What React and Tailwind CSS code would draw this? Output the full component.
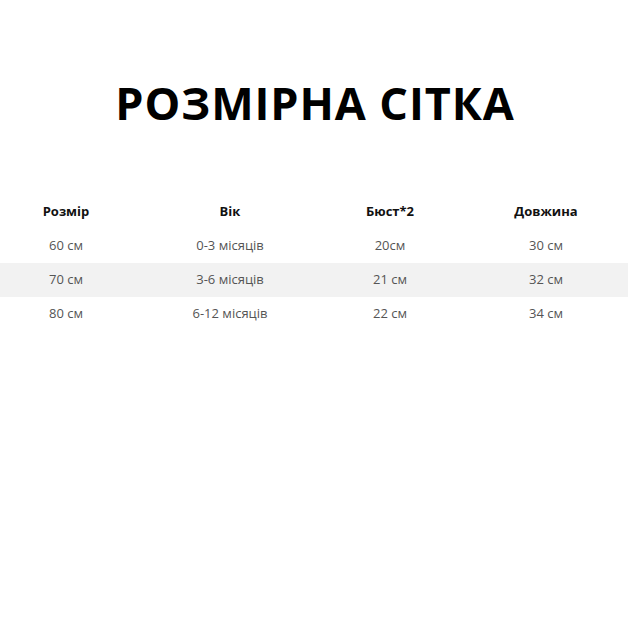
const HEAD = ['Розмір', 'Вік', 'Бюст*2', 'Довжина']

const ROWS = [
  ['60 см', '0-3 місяців', '20см', '30 см'],
  ['70 см', '3-6 місяців', '21 см', '32 см'],
  ['80 см', '6-12 місяців', '22 см', '34 см'],
]

const COLS = 'grid grid-cols-[132px_196px_124px_176px] w-[628px]'

export default function App() {
  return (
    <div className="w-[630px] h-[630px] bg-white font-['Open_Sans',sans-serif]">
      <h1 className="pt-[71px] text-center text-[45px] leading-[64px] font-bold text-black tracking-[0.9px]">
        РОЗМІРНА СІТКА
      </h1>

      <div className="mt-[60px]">
        <div className={`${COLS} h-[34px] items-center text-[13px] font-bold text-[#111]`}>
          {HEAD.map((h, i) => (
            <div key={h} className={i === 3 ? 'text-center pl-3' : 'text-center'}>{h}</div>
          ))}
        </div>
        {ROWS.map((r, ri) => (
          <div key={ri}
            className={`${COLS} h-[34px] items-center text-[13px] text-[#555] ${ri === 1 ? 'bg-[#f2f2f2]' : ''}`}>
            {r.map((c, i) => (
              <div key={i} className={i === 3 ? 'text-center pl-3' : 'text-center'}>{c}</div>
            ))}
          </div>
        ))}
      </div>
    </div>
  )
}
